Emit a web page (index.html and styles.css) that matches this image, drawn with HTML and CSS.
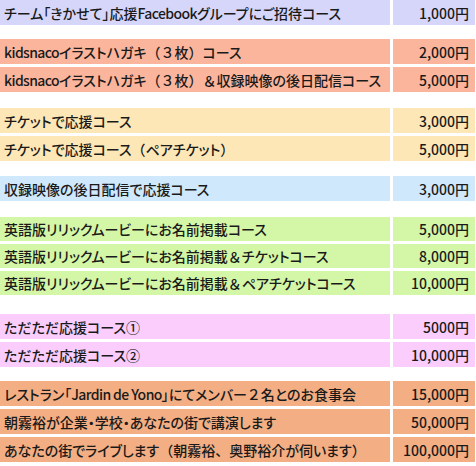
FILE: index.html
```html
<!DOCTYPE html>
<html lang="ja">
<head>
<meta charset="utf-8">
<link rel="stylesheet" href="styles.css">
</head>
<body>
<div class="list">
  <div class="group g-lavender">
    <div class="row"><div class="name">チーム「きかせて」応援<span class="lat">Facebook</span>グループにご招待コース</div><div class="price">1,000円</div></div>
  </div>
  <div class="group g-salmon">
    <div class="row"><div class="name"><span class="lat">kidsnaco</span>イラストハガキ<span class="fw">（３</span>枚<span class="fw">）</span>コース</div><div class="price">2,000円</div></div>
    <div class="row"><div class="name"><span class="lat">kidsnaco</span>イラストハガキ<span class="fw">（３</span>枚<span class="fw">）＆</span>収録映像の後日配信コース</div><div class="price">5,000円</div></div>
  </div>
  <div class="group g-cream">
    <div class="row"><div class="name">チケットで応援コース</div><div class="price">3,000円</div></div>
    <div class="row"><div class="name">チケットで応援コース<span class="fw">（</span>ペアチケット<span class="fw">）</span></div><div class="price">5,000円</div></div>
  </div>
  <div class="group g-blue">
    <div class="row"><div class="name">収録映像の後日配信で応援コース</div><div class="price">3,000円</div></div>
  </div>
  <div class="group g-green tight">
    <div class="row"><div class="name">英語版リリックムービーにお名前掲載コース</div><div class="price">5,000円</div></div>
    <div class="row"><div class="name">英語版リリックムービーにお名前掲載<span class="fw">＆</span>チケットコース</div><div class="price">8,000円</div></div>
    <div class="row"><div class="name">英語版リリックムービーにお名前掲載<span class="fw">＆</span>ペアチケットコース</div><div class="price">10,000円</div></div>
  </div>
  <div class="group g-pink">
    <div class="row"><div class="name">ただただ応援コース①</div><div class="price">5000円</div></div>
    <div class="row"><div class="name">ただただ応援コース②</div><div class="price">10,000円</div></div>
  </div>
  <div class="group g-tan">
    <div class="row"><div class="name">レストラン「<span class="lat">Jardin de Yono</span>」にてメンバー<span class="fw">２</span>名とのお食事会</div><div class="price">15,000円</div></div>
    <div class="row"><div class="name">朝霧裕が企業・学校・あなたの街で講演します</div><div class="price">50,000円</div></div>
    <div class="row"><div class="name">あなたの街でライブします<span class="fw">（</span>朝霧裕<span class="fw">、</span>奥野裕介が伺います<span class="fw">）</span></div><div class="price">100,000円</div></div>
  </div>
</div>
</body>
</html>
```

FILE: styles.css
```css
html, body {
  margin: 0;
  padding: 0;
  background: #ffffff;
}

body {
  font-family: "Noto Sans CJK JP", "Noto Sans", sans-serif;
  font-size: 14px;
  font-weight: 500;
  color: #1a1a1a;
  font-feature-settings: "palt";
}

.fw {
  font-feature-settings: normal;
}

.lat {
  letter-spacing: -0.6px;
}

.list {
  display: flex;
  flex-direction: column;
  width: 475px;
}

.group {
  display: flex;
  flex-direction: column;
  gap: 3px;
}

.g-lavender { margin-top: 0; }
.g-salmon { margin-top: 14px; }
.g-cream { margin-top: 16px; }
.g-blue { margin-top: 15px; }
.g-green { margin-top: 16px; }
.g-pink { margin-top: 19px; }
.g-tan { margin-top: 14px; }

.row {
  display: grid;
  grid-template-columns: 390px 82px;
  column-gap: 3px;
  height: 25px;
}

.tight .row {
  height: 24px;
}

.name,
.price {
  display: flex;
  align-items: center;
  white-space: nowrap;
  overflow: hidden;
}

.name {
  padding-left: 4px;
}

.price {
  justify-content: flex-end;
  padding-right: 6px;
}

.g-lavender .name, .g-lavender .price { background: #d6d6fb; }
.g-salmon .name, .g-salmon .price { background: #fbb59c; }
.g-cream .name, .g-cream .price { background: #fde7b6; }
.g-blue .name, .g-blue .price { background: #cfe8fb; }
.g-green .name, .g-green .price { background: #d3f7a6; }
.g-pink .name, .g-pink .price { background: #facdfc; }
.g-tan .name, .g-tan .price { background: #f3ae83; }
```
